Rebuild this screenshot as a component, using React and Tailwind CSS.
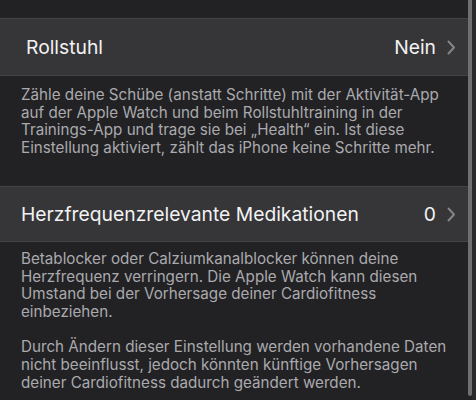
import React from "react";

function Chevron() {
  return (
    <svg width="9" height="15" viewBox="0 0 9 15" fill="none" className="ml-[11px]">
      <path d="M1.5 1.5L7 7.5L1.5 13.5" stroke="#858589" strokeWidth="2" strokeLinecap="round" strokeLinejoin="round" />
    </svg>
  );
}

function Row({ label, value, className }) {
  return (
    <div className={`flex items-center border-y border-[#434345] bg-[#363638] pr-[20px] ${className}`}>
      <span className="flex-1 text-[19.3px] text-[#f2f2f4]">{label}</span>
      <span className="text-[19.3px] text-[#f2f2f4]">{value}</span>
      <Chevron />
    </div>
  );
}

export default function App() {
  const font = { fontFamily: "Inter, 'Noto Sans', sans-serif" };
  return (
    <div className="relative h-[400px] w-[476px] overflow-hidden bg-[#222224]" style={font}>
      <div className="pt-[18px]">
        <Row label="Rollstuhl" value="Nein" className="h-[58px] pl-[26px]" />
        <div className="px-[21px] pb-[30px] pt-[10px] text-[15.2px] leading-[17.5px] text-[#aaaaae]">
          Zähle deine Schübe (anstatt Schritte) mit der Aktivität-App auf der Apple Watch und beim Rollstuhltraining in der
          Trainings-App und trage sie bei „Health“ ein. Ist diese Einstellung aktiviert, zählt das iPhone keine Schritte mehr.
        </div>
        <Row label="Herzfrequenzrelevante Medikationen" value="0" className="h-[56px] pl-[21px]" />
        <div className="px-[21px] pt-[8px] text-[15.2px] leading-[17.6px] text-[#aaaaae]">
          <p>
            Betablocker oder Calziumkanalblocker können deine Herzfrequenz verringern. Die Apple Watch kann diesen
            Umstand bei der Vorhersage deiner Cardiofitness einbeziehen.
          </p>
          <p className="mt-[18px]">
            Durch Ändern dieser Einstellung werden vorhandene Daten nicht beeinflusst, jedoch könnten künftige
            Vorhersagen deiner Cardiofitness dadurch geändert werden.
          </p>
        </div>
      </div>
      <div className="absolute right-0 top-0 h-full w-[4px] bg-[#29292b]" />
      <div className="absolute right-[4px] top-0 h-[396px] w-[4px] rounded-b-full bg-[#6f6f71]" />
    </div>
  );
}
